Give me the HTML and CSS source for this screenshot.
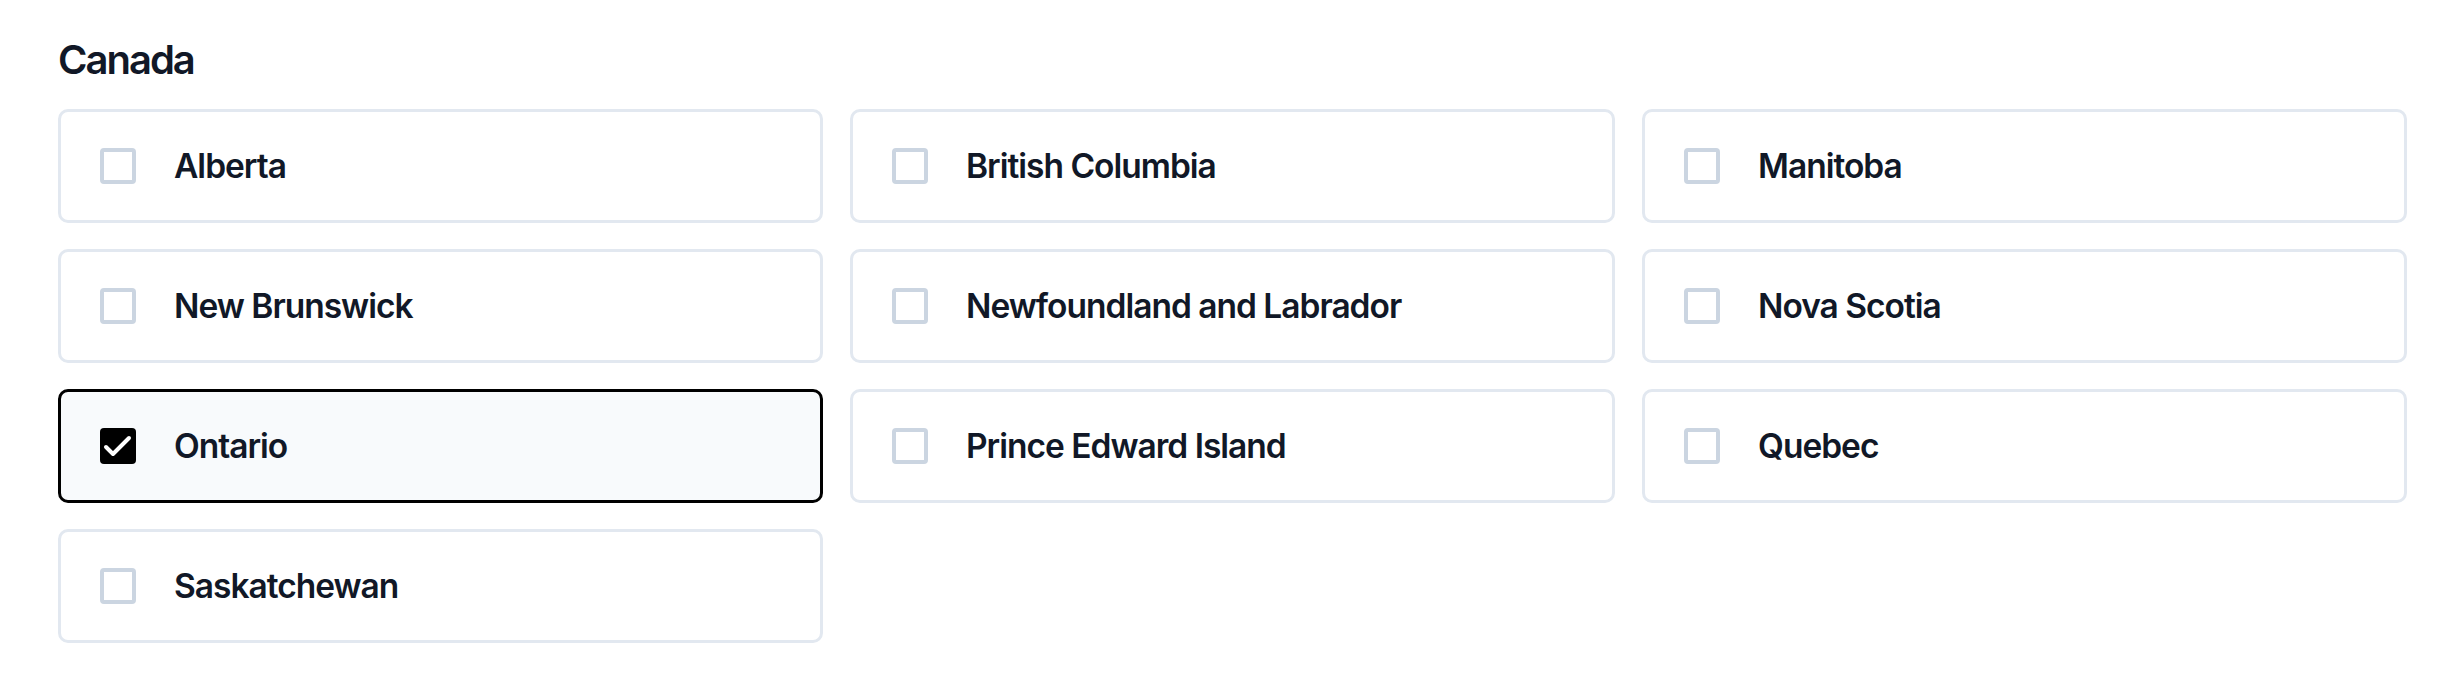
FILE: index.html
```html
<!DOCTYPE html>
<html lang="en">
<head>
  <meta charset="UTF-8" />
  <meta name="viewport" content="width=device-width, initial-scale=1.0"/>
  <title>Provinces</title>
  <link rel="stylesheet" href="styles.css">
</head>
<body>
  <fieldset class="region">
    <legend class="region-title">Canada</legend>
    <div class="options">
      <label class="option"><span class="box"></span><span class="name">Alberta</span></label>
      <label class="option"><span class="box"></span><span class="name">British Columbia</span></label>
      <label class="option"><span class="box"></span><span class="name">Manitoba</span></label>
      <label class="option"><span class="box"></span><span class="name">New Brunswick</span></label>
      <label class="option"><span class="box"></span><span class="name">Newfoundland and Labrador</span></label>
      <label class="option"><span class="box"></span><span class="name">Nova Scotia</span></label>
      <label class="option checked">
        <span class="box">
          <svg viewBox="0 0 36 36" width="36" height="36"><polyline points="6,19 13,26 29,10" fill="none" stroke="#fff" stroke-width="4" stroke-linecap="round" stroke-linejoin="round"/></svg>
        </span>
        <span class="name">Ontario</span>
      </label>
      <label class="option"><span class="box"></span><span class="name">Prince Edward Island</span></label>
      <label class="option"><span class="box"></span><span class="name">Quebec</span></label>
      <label class="option"><span class="box"></span><span class="name">Saskatchewan</span></label>
    </div>
  </fieldset>
</body>
</html>
```

FILE: styles.css
```css
body {
  margin: 0;
  padding: 37px 49px 0 58px;
  background: #fff;
  color: #111827;
  font-family: Inter, "Noto Sans", sans-serif;
}
.region {
  border: none;
  margin: 0;
  padding: 0;
}
.region-title {
  padding: 0;
  font-size: 40px;
  line-height: 46px;
  font-weight: 600;
  letter-spacing: -2px;
  margin-bottom: 26px;
}
.options {
  display: grid;
  grid-template-columns: repeat(3, 1fr);
  gap: 26px 27px;
}
.option {
  display: flex;
  align-items: center;
  gap: 38px;
  height: 114px;
  box-sizing: border-box;
  padding: 0 38px 0 39px;
  border: 3px solid #e2e8f0;
  border-radius: 10px;
  background: #fff;
}
.box {
  width: 36px;
  height: 36px;
  box-sizing: border-box;
  border: 4px solid #cbd5e1;
  border-radius: 4px;
  flex: none;
  display: flex;
}
.name {
  font-size: 33.5px;
  font-weight: 600;
  letter-spacing: -1px;
}
.option.checked {
  border-color: #000;
  background: #f8fafc;
}
.option.checked .box {
  border: none;
  background: #000;
}
```
